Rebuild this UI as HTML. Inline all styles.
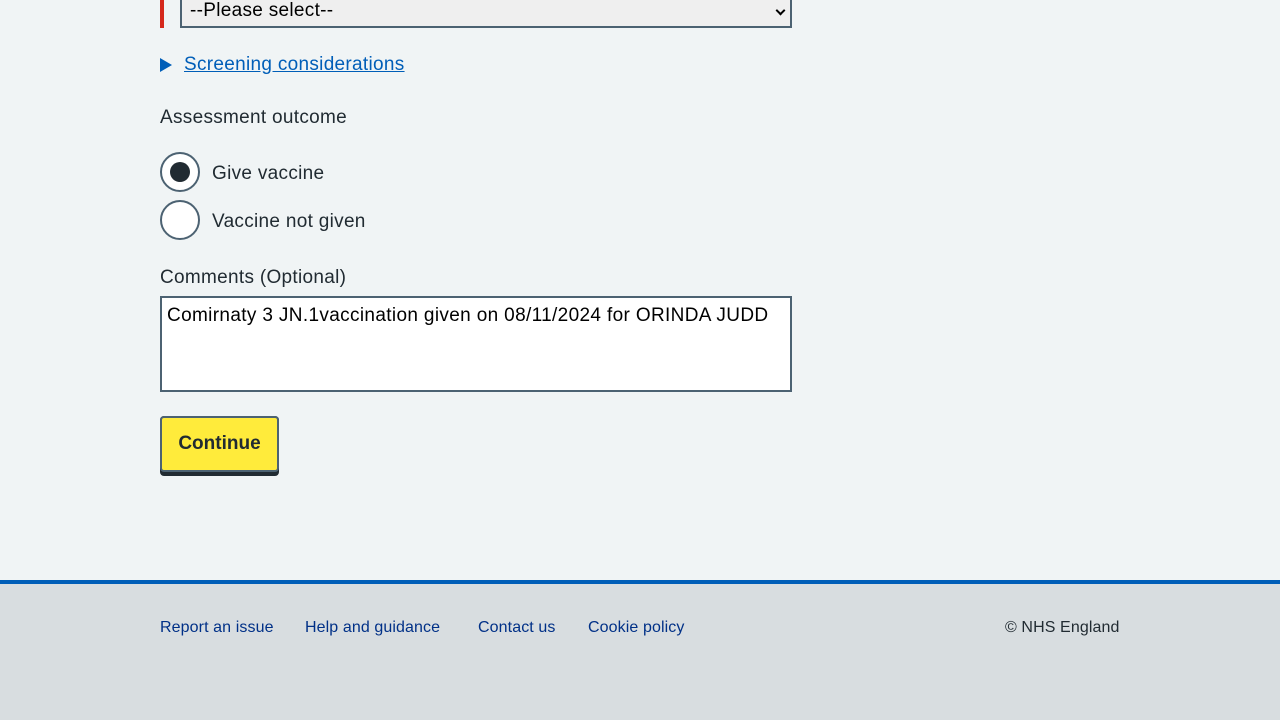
<!DOCTYPE html>
<html><head><meta charset="utf-8"><style>
*{box-sizing:border-box;margin:0;padding:0}
body{width:1280px;height:720px;background:#f0f4f5;font-family:"Liberation Sans",sans-serif;color:#212b32;position:relative;overflow:hidden}
.a{position:absolute;white-space:nowrap}
.bar{left:160px;top:0;width:4px;height:28px;background:#d5281b}
.sel{left:180px;top:-12px;width:612px;height:40px;border:2px solid #4c6272;background:#efefef;font-size:19px;color:#000;padding:10px 8px;letter-spacing:0.3px}
.chev{position:absolute;right:6px;top:17px;width:7px;height:7px;border-right:2px solid #000;border-bottom:2px solid #000;transform:rotate(45deg)}
.tri{left:160px;top:58px;width:0;height:0;border-left:12px solid #005eb8;border-top:7px solid transparent;border-bottom:7px solid transparent}
.link{left:184px;top:54px;font-size:19px;color:#005eb8;text-decoration:underline;letter-spacing:0.3px}
.t{font-size:19px;letter-spacing:0.3px}
.radio{width:40px;height:40px;border:2px solid #4c6272;border-radius:50%;background:#fff}
.dot{position:absolute;left:8px;top:8px;width:20px;height:20px;border-radius:50%;background:#212b32}
.ta{left:160px;top:296px;width:632px;height:96px;border:2px solid #4c6272;background:#fff;font-size:19px;color:#000;padding:7px 5px;letter-spacing:0.35px}
.btn{left:160px;top:416px;width:119px;height:60px;background:#212b32;border-radius:4px}
.btn div{position:absolute;left:0;top:0;width:119px;height:56px;background:#ffeb3b;border:2px solid #4c6272;border-radius:4px;font-weight:bold;font-size:19px;text-align:center;line-height:52px;color:#212b32}
.foot{left:0;top:580px;width:1280px;height:140px;background:#d8dde0;border-top:4px solid #005eb8}
.fl{top:619px;font-size:16px;color:#003087;letter-spacing:0.1px}
</style></head><body>
<div class="a bar"></div>
<div class="a sel">--Please select--<span class="chev"></span></div>
<div class="a tri"></div>
<div class="a link">Screening considerations</div>
<div class="a t" style="left:160px;top:107px">Assessment outcome</div>
<div class="a radio" style="left:160px;top:152px"><div class="dot"></div></div>
<div class="a t" style="left:212px;top:163px">Give vaccine</div>
<div class="a radio" style="left:160px;top:200px"></div>
<div class="a t" style="left:212px;top:211px">Vaccine not given</div>
<div class="a t" style="left:160px;top:267px">Comments (Optional)</div>
<div class="a ta">Comirnaty 3 JN.1vaccination given on 08/11/2024 for ORINDA JUDD</div>
<div class="a btn"><div>Continue</div></div>
<div class="a foot"></div>
<div class="a fl" style="left:160px">Report an issue</div>
<div class="a fl" style="left:305px">Help and guidance</div>
<div class="a fl" style="left:478px">Contact us</div>
<div class="a fl" style="left:588px">Cookie policy</div>
<div class="a fl" style="left:1005px;color:#212b32">© NHS England</div>
</body></html>
